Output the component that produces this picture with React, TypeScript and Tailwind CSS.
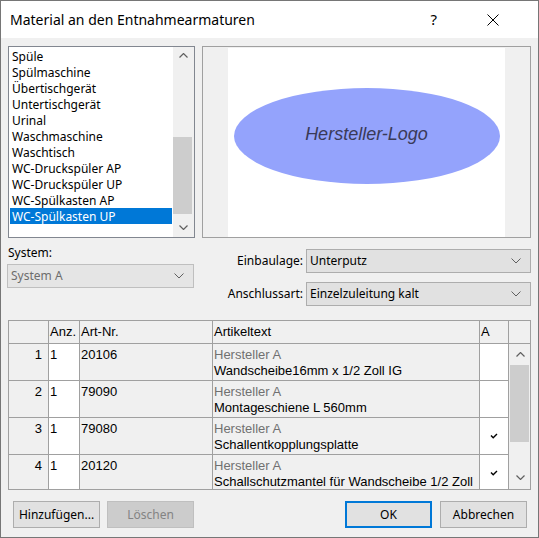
import React from 'react';

const ui = { fontFamily: '"Noto Sans", "Open Sans", sans-serif' };
const grid = { fontFamily: '"Liberation Sans", Arial, sans-serif' };

const listItems = [
  'Spüle',
  'Spülmaschine',
  'Übertischgerät',
  'Untertischgerät',
  'Urinal',
  'Waschmaschine',
  'Waschtisch',
  'WC-Druckspüler AP',
  'WC-Druckspüler UP',
  'WC-Spülkasten AP',
  'WC-Spülkasten UP',
];

const rows = [
  { nr: 1, anz: '1', art: '20106', text: 'Wandscheibe16mm x 1/2 Zoll IG', a: false },
  { nr: 2, anz: '1', art: '79090', text: 'Montageschiene L 560mm', a: false },
  { nr: 3, anz: '1', art: '79080', text: 'Schallentkopplungsplatte', a: true },
  { nr: 4, anz: '1', art: '20120', text: 'Schallschutzmantel für Wandscheibe 1/2 Zoll', a: true },
];

const Chevron = ({ up = false, className = '' }: { up?: boolean; className?: string }) => (
  <svg width="9" height="5" viewBox="0 0 9 5" className={className}>
    <path d={up ? 'M0.5 4.5 L4.5 0.5 L8.5 4.5' : 'M0.5 0.5 L4.5 4.5 L8.5 0.5'} fill="none" stroke="#606060" strokeWidth="1.2" />
  </svg>
);

const SmallChevron = () => (
  <svg width="10" height="6" viewBox="0 0 10 6">
    <path d="M0.5 0.5 L5 5 L9.5 0.5" fill="none" stroke="#606060" strokeWidth="1" />
  </svg>
);

const Check = () => (
  <svg width="8" height="6" viewBox="0 0 8 6">
    <path d="M1 2.5 L3.2 4.8 L7 1" fill="none" stroke="#000" strokeWidth="1.4" />
  </svg>
);

const Combo = ({ value, disabled = false, w }: { value: string; disabled?: boolean; w: string }) => (
  <div
    className={`${w} h-[24px] flex items-center pl-[3px] pr-[9px] border text-[12px] ${
      disabled ? 'bg-[#e5e5e5] border-[#bfbfbf] text-[#6d6d6d]' : 'bg-[#e1e1e1] border-[#adadad] text-black'
    }`}
  >
    <span className="flex-1 leading-none">{value}</span>
    <SmallChevron />
  </div>
);

const Button = ({ label, variant = 'normal' }: { label: string; variant?: 'normal' | 'disabled' | 'default' }) => {
  const cls =
    variant === 'disabled'
      ? 'bg-[#cccccc] border border-[#bfbfbf] text-[#838383]'
      : variant === 'default'
      ? 'bg-[#e1e1e1] border-2 border-[#0078d7] text-black'
      : 'bg-[#e1e1e1] border border-[#adadad] text-black';
  return <div className={`w-[87px] h-[27px] flex items-center justify-center text-[12px] ${cls}`}>{label}</div>;
};

export default function App() {
  return (
    <div className="w-[539px] h-[538px] border border-[#767676] bg-[#f0f0f0] flex flex-col overflow-hidden" style={ui}>
      {/* title bar */}
      <div className="h-[37px] bg-white flex items-center pl-[9px] shrink-0">
        <span className="text-[14px] text-black">Material an den Entnahmearmaturen</span>
        <span className="ml-auto text-[15px] text-black mr-[50px]">?</span>
        <svg width="12" height="12" viewBox="0 0 12 12" className="mr-[39px]">
          <path d="M0.5 0.5 L11.5 11.5 M11.5 0.5 L0.5 11.5" stroke="#000" strokeWidth="1" />
        </svg>
      </div>

      <div className="flex-1 flex flex-col px-[7px] pt-[8px]">
        {/* top: list + logo */}
        <div className="flex gap-[7px] h-[192px] shrink-0">
          <div className="w-[187px] border border-[#828790] bg-white flex text-[12px]">
            <div className="w-[162px] ml-px pt-px">
              {listItems.map((it, i) => (
                <div
                  key={it}
                  className={`h-[16px] leading-[17px] pl-[2px] whitespace-nowrap ${
                    i === listItems.length - 1 ? 'bg-[#0078d7] text-white' : 'text-black'
                  }`}
                >
                  {it}
                </div>
              ))}
            </div>
            <div className="w-[21px] ml-[1px] bg-[#f0f0f0] flex flex-col items-center">
              <div className="h-[17px] flex items-center justify-center">
                <Chevron up />
              </div>
              <div className="flex-1 w-full">
                <div className="mt-[73px] h-[77px] w-[19px] bg-[#cdcdcd]" />
              </div>
              <div className="h-[19px] flex items-center justify-center">
                <Chevron />
              </div>
            </div>
          </div>

          <div className="w-[329px] border border-[#a0a0a0] bg-[#f0f0f0] pt-px flex justify-center">
            <div className="w-[277px] bg-white flex flex-col items-center">
              <div className="mt-[40px] w-[266px] h-[96px] rounded-[50%] bg-[#94a3fc] flex items-center justify-center">
                <span className="text-[18px] italic text-[#3a3a58] -mt-[3px]" style={grid}>
                  Hersteller-Logo
                </span>
              </div>
            </div>
          </div>
        </div>

        {/* middle: combos */}
        <div className="flex mt-[8px] shrink-0">
          <div className="w-[187px] -ml-px flex flex-col">
            <div className="h-[18px] text-[12px] leading-[14px] pl-px">System:</div>
            <Combo value="System A" disabled w="w-[187px]" />
          </div>
          <div className="ml-auto pt-[3px] flex flex-col gap-[9px] text-[12px]">
            <div className="flex items-center justify-end gap-[3px]">
              <span>Einbaulage:</span>
              <Combo value="Unterputz" w="w-[225px]" />
            </div>
            <div className="flex items-center justify-end gap-[3px]">
              <span>Anschlussart:</span>
              <Combo value="Einzelzuleitung kalt" w="w-[225px]" />
            </div>
          </div>
        </div>

        {/* table */}
        <div className="mt-[14px] h-[170px] w-[523px] border border-[#a0a0a0] flex overflow-hidden text-[13px] shrink-0" style={grid}>
          <div className="flex flex-col">
            <div className="flex h-[23px] shrink-0 bg-[#f0f0f0] leading-[22px]">
              <div className="w-[40px] border-r border-b border-[#a0a0a0]" />
              <div className="w-[31px] border-r border-b border-[#a0a0a0] pl-px">Anz.</div>
              <div className="w-[133px] border-r border-b border-[#a0a0a0] pl-px">Art-Nr.</div>
              <div className="w-[267px] border-r border-b border-[#a0a0a0] pl-px">Artikeltext</div>
              <div className="w-[29px] border-r border-b border-[#a0a0a0] pl-px">A</div>
            </div>
            {rows.map((r) => (
              <div key={r.nr} className="flex h-[37px] shrink-0 leading-[16px]">
                <div className="w-[40px] border-r border-b border-[#a0a0a0] bg-[#f0f0f0] text-right pr-[6px] pt-[3px]">{r.nr}</div>
                <div className="w-[31px] border-r border-b border-[#a0a0a0] bg-white pl-px pt-[3px]">{r.anz}</div>
                <div className="w-[133px] border-r border-b border-[#a0a0a0] bg-[#f0f0f0] pl-px pt-[3px]">{r.art}</div>
                <div className="w-[267px] border-r border-b border-[#a0a0a0] bg-[#f0f0f0] pl-px pt-[3px] overflow-hidden whitespace-nowrap">
                  <div className="text-[#707070]">Hersteller A</div>
                  <div className="text-black">{r.text}</div>
                </div>
                <div className="w-[29px] border-r border-b border-[#a0a0a0] bg-white flex items-center justify-center">
                  {r.a && <Check />}
                </div>
              </div>
            ))}
          </div>
          <div className="w-[21px] flex flex-col">
            <div className="h-[23px] shrink-0 border-b border-[#a0a0a0] bg-[#f0f0f0]" />
            <div className="flex-1 bg-[#f0f0f0] pl-px flex flex-col">
              <div className="h-[20px] flex items-center justify-center">
                <Chevron up />
              </div>
              <div className="h-[77px] w-[19px] mt-px bg-[#cdcdcd]" />
              <div className="flex-1" />
              <div className="h-[22px] flex items-center justify-center pb-[2px]">
                <Chevron />
              </div>
            </div>
          </div>
        </div>

        {/* buttons */}
        <div className="flex mt-[11px] pl-[5px] pr-[4px] gap-[7px] shrink-0">
          <Button label="Hinzufügen..." />
          <Button label="Löschen" variant="disabled" />
          <div className="ml-auto flex gap-[8px]">
            <Button label="OK" variant="default" />
            <Button label="Abbrechen" />
          </div>
        </div>
      </div>
    </div>
  );
}
